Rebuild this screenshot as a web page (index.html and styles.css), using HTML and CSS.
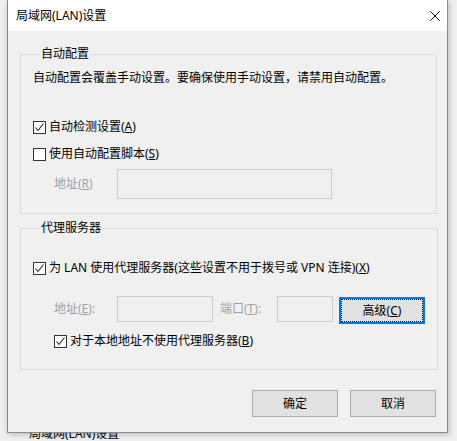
FILE: index.html
```html
<!DOCTYPE html>
<html lang="zh-CN">

<head>
    <meta charset="UTF-8">
    <meta name="viewport" content="width=device-width, initial-scale=1.0">
    <title>局域网(LAN)设置</title>
    <link rel="stylesheet" href="styles.css">
</head>

<body>
    <div class="window">
        <div class="titlebar">
            <span class="title">局域网(LAN)设置</span>
            <svg class="close" width="10" height="10" viewBox="0 0 10 10">
                <path d="M0.5 0.5 L9.5 9.5 M9.5 0.5 L0.5 9.5" stroke="#000" stroke-width="1" fill="none" />
            </svg>
        </div>

        <div class="client">
            <!-- 自动配置 -->
            <fieldset class="group group-auto">
                <legend>自动配置</legend>
                <p class="desc">自动配置会覆盖手动设置。要确保使用手动设置，请禁用自动配置。</p>
                <label class="check check-first">
                    <span class="box"><svg width="11" height="11" viewBox="0 0 11 11"><path d="M1.5 5.5 L4 8.5 L9.5 1.5" stroke="#222" stroke-width="1.1" fill="none" /></svg></span>
                    <span class="text">自动检测设置(<u>A</u>)</span>
                </label>
                <label class="check check-second">
                    <span class="box"></span>
                    <span class="text">使用自动配置脚本(<u>S</u>)</span>
                </label>
                <div class="field-row script-row">
                    <span class="label disabled">地址(<u>R</u>)</span>
                    <span class="input input-script"></span>
                </div>
            </fieldset>

            <!-- 代理服务器 -->
            <fieldset class="group group-proxy">
                <legend>代理服务器</legend>
                <label class="check">
                    <span class="box"><svg width="11" height="11" viewBox="0 0 11 11"><path d="M1.5 5.5 L4 8.5 L9.5 1.5" stroke="#222" stroke-width="1.1" fill="none" /></svg></span>
                    <span class="text">为 LAN 使用代理服务器(这些设置不用于拨号或 VPN 连接)(<u>X</u>)</span>
                </label>
                <div class="field-row proxy-row">
                    <span class="label disabled">地址(<u>E</u>):</span>
                    <span class="input input-addr"></span>
                    <span class="label label-port disabled">端口(<u>T</u>):</span>
                    <span class="input input-port"></span>
                    <button class="btn btn-focus">高级(<u>C</u>)</button>
                </div>
                <label class="check check-bypass">
                    <span class="box"><svg width="11" height="11" viewBox="0 0 11 11"><path d="M1.5 5.5 L4 8.5 L9.5 1.5" stroke="#222" stroke-width="1.1" fill="none" /></svg></span>
                    <span class="text">对于本地地址不使用代理服务器(<u>B</u>)</span>
                </label>
            </fieldset>

            <div class="actions">
                <button class="btn">确定</button>
                <button class="btn">取消</button>
            </div>
        </div>
    </div>

    <!-- 被遮住的父窗口文字 -->
    <div class="behind">
        <span class="behind-text">局域网(LAN)设置</span>
    </div>
</body>

</html>
```

FILE: styles.css
```css
* {
    margin: 0;
    padding: 0;
    box-sizing: border-box;
}

body {
    background: #f0f0f0;
    font-family: "Noto Sans", "Noto Sans CJK SC", sans-serif;
    font-size: 12px;
    line-height: 16px;
    color: #000;
    height: 441px;
    overflow: hidden;
}

u {
    text-decoration: underline;
    text-underline-offset: 1px;
}

/* 对话框窗口 */
.window {
    position: relative;
    z-index: 1;
    margin-left: 7px;
    width: 441px;
    height: 433px;
    border: 1px solid #8a8a8a;
    border-top: none;
    background: #f0f0f0;
    display: flex;
    flex-direction: column;
    box-shadow: 1px 1px 6px rgba(0, 0, 0, 0.25);
}

/* 标题栏 */
.titlebar {
    height: 31px;
    background: #fff;
    display: flex;
    align-items: center;
    justify-content: space-between;
    padding: 0 7px 0 8px;
}

.close {
    display: block;
}

/* 主体区域 */
.client {
    flex: 1;
    padding: 15px 10px 0 12px;
}

.group {
    border: 1px solid #dcdcdc;
    padding: 0 12px;
}

.group legend {
    margin-left: 7px;
    padding: 0 1px;
    line-height: 16px;
}

.group-auto {
    padding-top: 8px;
    padding-bottom: 14px;
}

.group-proxy {
    margin-top: 6px;
    padding-top: 24px;
    padding-bottom: 20px;
}

.desc {
    line-height: 16px;
}

/* 复选框 */
.check {
    display: flex;
    align-items: center;
    gap: 3px;
    height: 16px;
    white-space: nowrap;
}

.box {
    width: 13px;
    height: 13px;
    border: 1px solid #333;
    background: #fff;
    display: flex;
    align-items: center;
    justify-content: center;
    flex-shrink: 0;
}

.check-first {
    margin-top: 33px;
}

.check-second {
    margin-top: 11px;
}

.check-bypass {
    margin-top: 9px;
    margin-left: 21px;
}

/* 输入行 */
.field-row {
    display: flex;
    align-items: center;
    padding-left: 21px;
}

.script-row {
    margin-top: 7px;
}

.proxy-row {
    margin-top: 20px;
    align-items: flex-start;
}

.label {
    width: 63px;
    white-space: nowrap;
}

.proxy-row .label {
    line-height: 26px;
}

.disabled {
    color: #a0a0a0;
}

.label-port {
    width: 57px;
    margin-left: 7px;
}

.input {
    display: block;
    border: 1px solid #cccccc;
    background: #f0f0f0;
}

.input-script {
    width: 215px;
    height: 30px;
}

.input-addr {
    width: 96px;
    height: 26px;
}

.input-port {
    width: 56px;
    height: 26px;
}

/* 按钮 */
.btn {
    font: inherit;
    color: #000;
    width: 86px;
    height: 27px;
    background: #e1e1e1;
    border: 1px solid #adadad;
}

.btn-focus {
    margin-left: 6px;
    margin-top: 1px;
    border: 2px solid #0078d7;
    outline: 1px dotted #000;
    outline-offset: -3px;
}

.actions {
    display: flex;
    justify-content: flex-end;
    gap: 12px;
    margin-top: 20px;
    margin-right: 1px;
}

/* 底部父窗口 */
.behind {
    height: 8px;
    overflow: hidden;
    padding-left: 29px;
}

.behind-text {
    display: block;
    margin-top: -7px;
}
```
